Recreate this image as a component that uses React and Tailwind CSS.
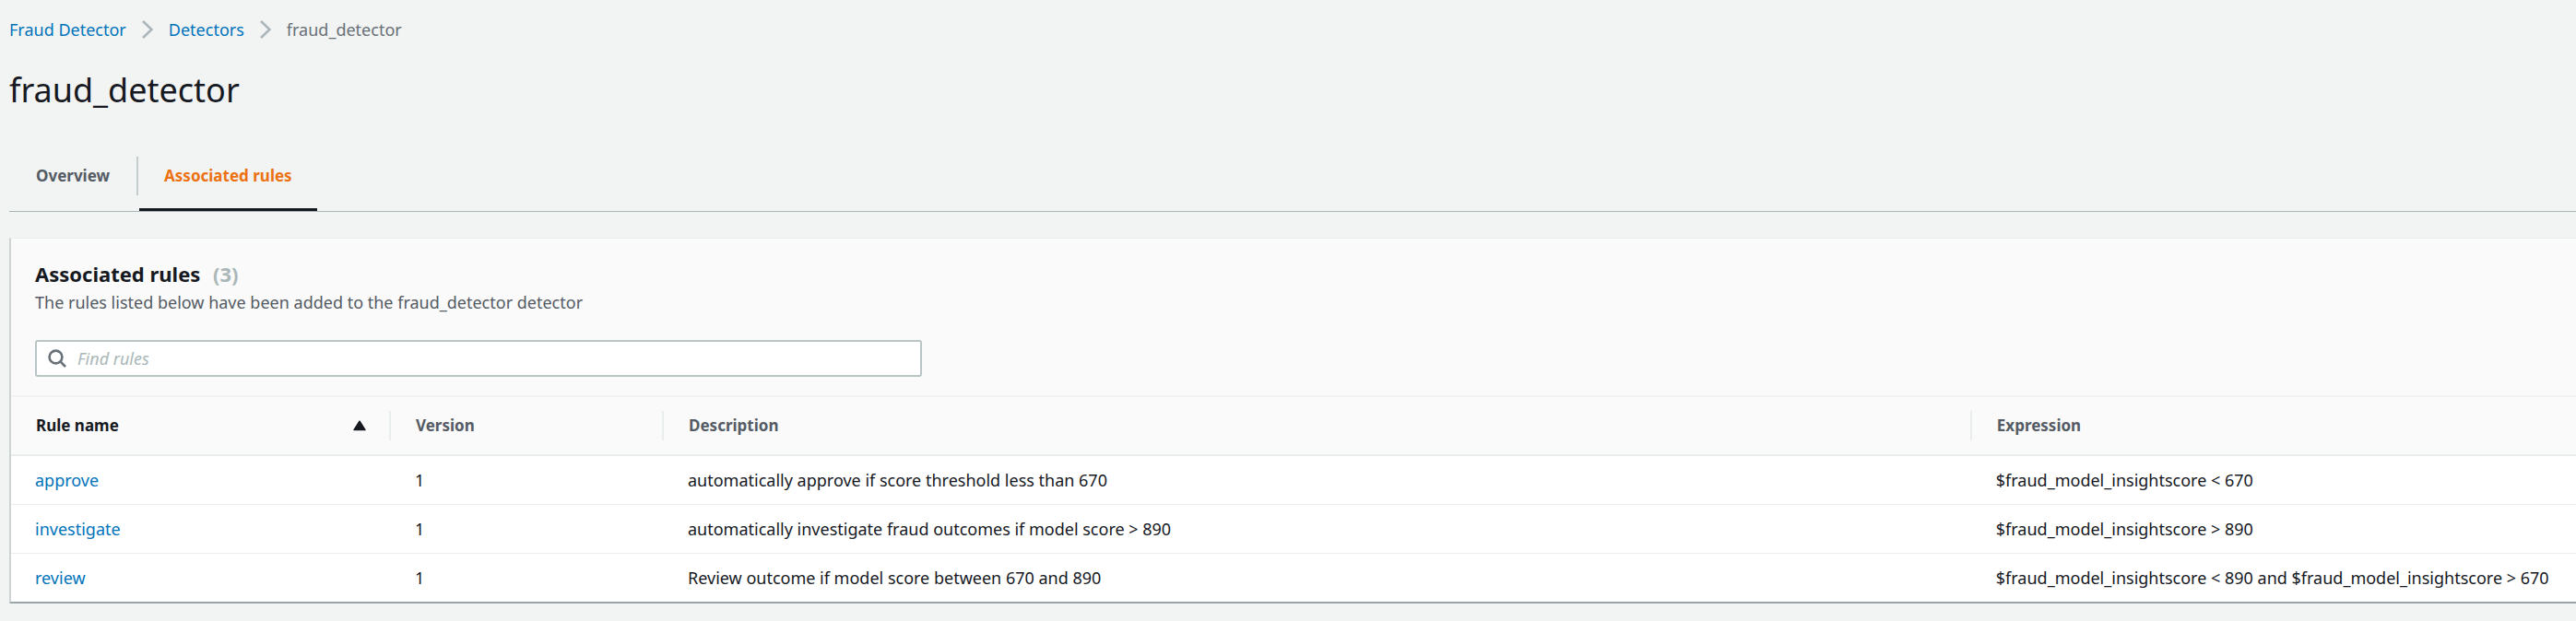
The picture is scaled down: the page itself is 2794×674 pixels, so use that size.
const rules = [
  { name: "approve", version: 1, description: "automatically approve if score threshold less than 670", expression: "$fraud_model_insightscore < 670" },
  { name: "investigate", version: 1, description: "automatically investigate fraud outcomes if model score > 890", expression: "$fraud_model_insightscore > 890" },
  { name: "review", version: 1, description: "Review outcome if model score between 670 and 890", expression: "$fraud_model_insightscore < 890 and $fraud_model_insightscore > 670" },
];

const columns = ["Version", "Description", "Expression"];

function Chevron() {
  return (
    <svg className="mx-[17px] h-5 w-3 shrink-0" viewBox="0 0 12 20" fill="none" stroke="#aab7b8" strokeWidth="2.6" aria-hidden="true">
      <path d="M1 1 L10.5 10 L1 19" />
    </svg>
  );
}

function Breadcrumbs() {
  return (
    <nav aria-label="Breadcrumb" className="flex h-6 items-center text-[18px] leading-6">
      <a href="#home" className="text-[#0073bb]">Fraud Detector</a>
      <Chevron />
      <a href="#detectors" className="text-[#0073bb]">Detectors</a>
      <Chevron />
      <span className="text-[#687078]">fraud_detector</span>
    </nav>
  );
}

function Tabs() {
  return (
    <div role="tablist" className="mt-12 flex border-b border-[#aab7b8] text-[17px] font-bold leading-6">
      <div className="flex items-center pb-[17px]">
        <button role="tab" aria-selected="false" className="h-[42px] border-r-2 border-[#c4cdcd] px-[29px] text-[#545b64]">Overview</button>
      </div>
      <button role="tab" aria-selected="true" className="ml-px border-b-[3px] border-[#16191f] px-[27px] pb-[14px] text-[#ec7211]">Associated rules</button>
    </div>
  );
}

function SearchBox() {
  return (
    <label className="mt-[26px] flex h-10 w-full max-w-[962px] items-center rounded-[3px] border-2 border-[#b9c4c5] bg-white pl-3">
      <svg className="h-5 w-5 shrink-0" viewBox="0 0 20 20" fill="none" stroke="#687078" strokeWidth="2.6" aria-hidden="true">
        <circle cx="8.5" cy="8.5" r="6.9" />
        <path d="M13.2 13.2 L19 19" />
      </svg>
      <input type="text" aria-label="Find rules" placeholder="Find rules" className="ml-3 h-full min-w-0 flex-1 bg-transparent text-[18px] outline-none placeholder:italic placeholder:text-[#aab7b8]" />
    </label>
  );
}

function RulesTable() {
  return (
    <table className="w-full table-fixed border-t-2 border-[#f2f3f3] text-left text-[18px] leading-6 text-[#16191f]">
      <colgroup>
        <col className="w-[412px]" />
        <col className="w-[296px]" />
        <col className="w-[51%]" />
        <col />
      </colgroup>
      <thead className="border-b-2 border-[#eaeded] text-[17px]">
        <tr>
          <th scope="col" aria-sort="ascending" className="py-[15px] pl-[27px]">
            <button className="flex h-8 w-full items-center justify-between border-r-2 border-[#eaeded] pr-6 font-bold">
              Rule name
              <svg className="h-3 w-4" viewBox="0 0 16 12" fill="#16191f" stroke="#16191f" strokeWidth="1.5" strokeLinejoin="round" aria-hidden="true">
                <path d="M8 1.2 L14 10.6 H2 Z" />
              </svg>
            </button>
          </th>
          {columns.map((label) => (
            <th key={label} scope="col" className="group py-[15px] text-[#545b64]">
              <div className="flex h-8 items-center border-r-2 border-[#eaeded] pl-[27px] group-last:border-0">{label}</div>
            </th>
          ))}
        </tr>
      </thead>
      <tbody className="divide-y divide-[#eaeded] bg-white">
        {rules.map((rule) => (
          <tr key={rule.name} className="h-[53px]">
            <td className="pl-[26px]"><a href={"#" + rule.name} className="text-[#0073bb]">{rule.name}</a></td>
            <td className="pl-[26px]">{rule.version}</td>
            <td className="pl-[26px]">{rule.description}</td>
            <td className="whitespace-nowrap pl-[26px]">{rule.expression}</td>
          </tr>
        ))}
      </tbody>
    </table>
  );
}

export default function App() {
  return (
    <main className="min-h-screen bg-[#f2f3f3] pl-[10px] pt-5 font-['Noto_Sans',sans-serif]">
      <Breadcrumbs />
      <h1 className="mt-[30px] text-[36px] leading-[48px] text-[#16191f]">fraud_detector</h1>
      <Tabs />
      <section className="mt-7 border-b-2 border-l-2 border-t border-b-[#98a4a5] border-l-[#cdd4d4] border-t-[#eaeded] bg-[#fafafa]">
        <div className="px-[26px] pb-5 pt-[22px]">
          <h2 className="text-[22px] font-bold leading-8 text-[#16191f]">
            Associated rules <span className="ml-2 text-[#aab7b8]">(3)</span>
          </h2>
          <p className="text-[18px] leading-[30px] text-[#545b64]">The rules listed below have been added to the fraud_detector detector</p>
          <SearchBox />
        </div>
        <RulesTable />
      </section>
    </main>
  );
}
